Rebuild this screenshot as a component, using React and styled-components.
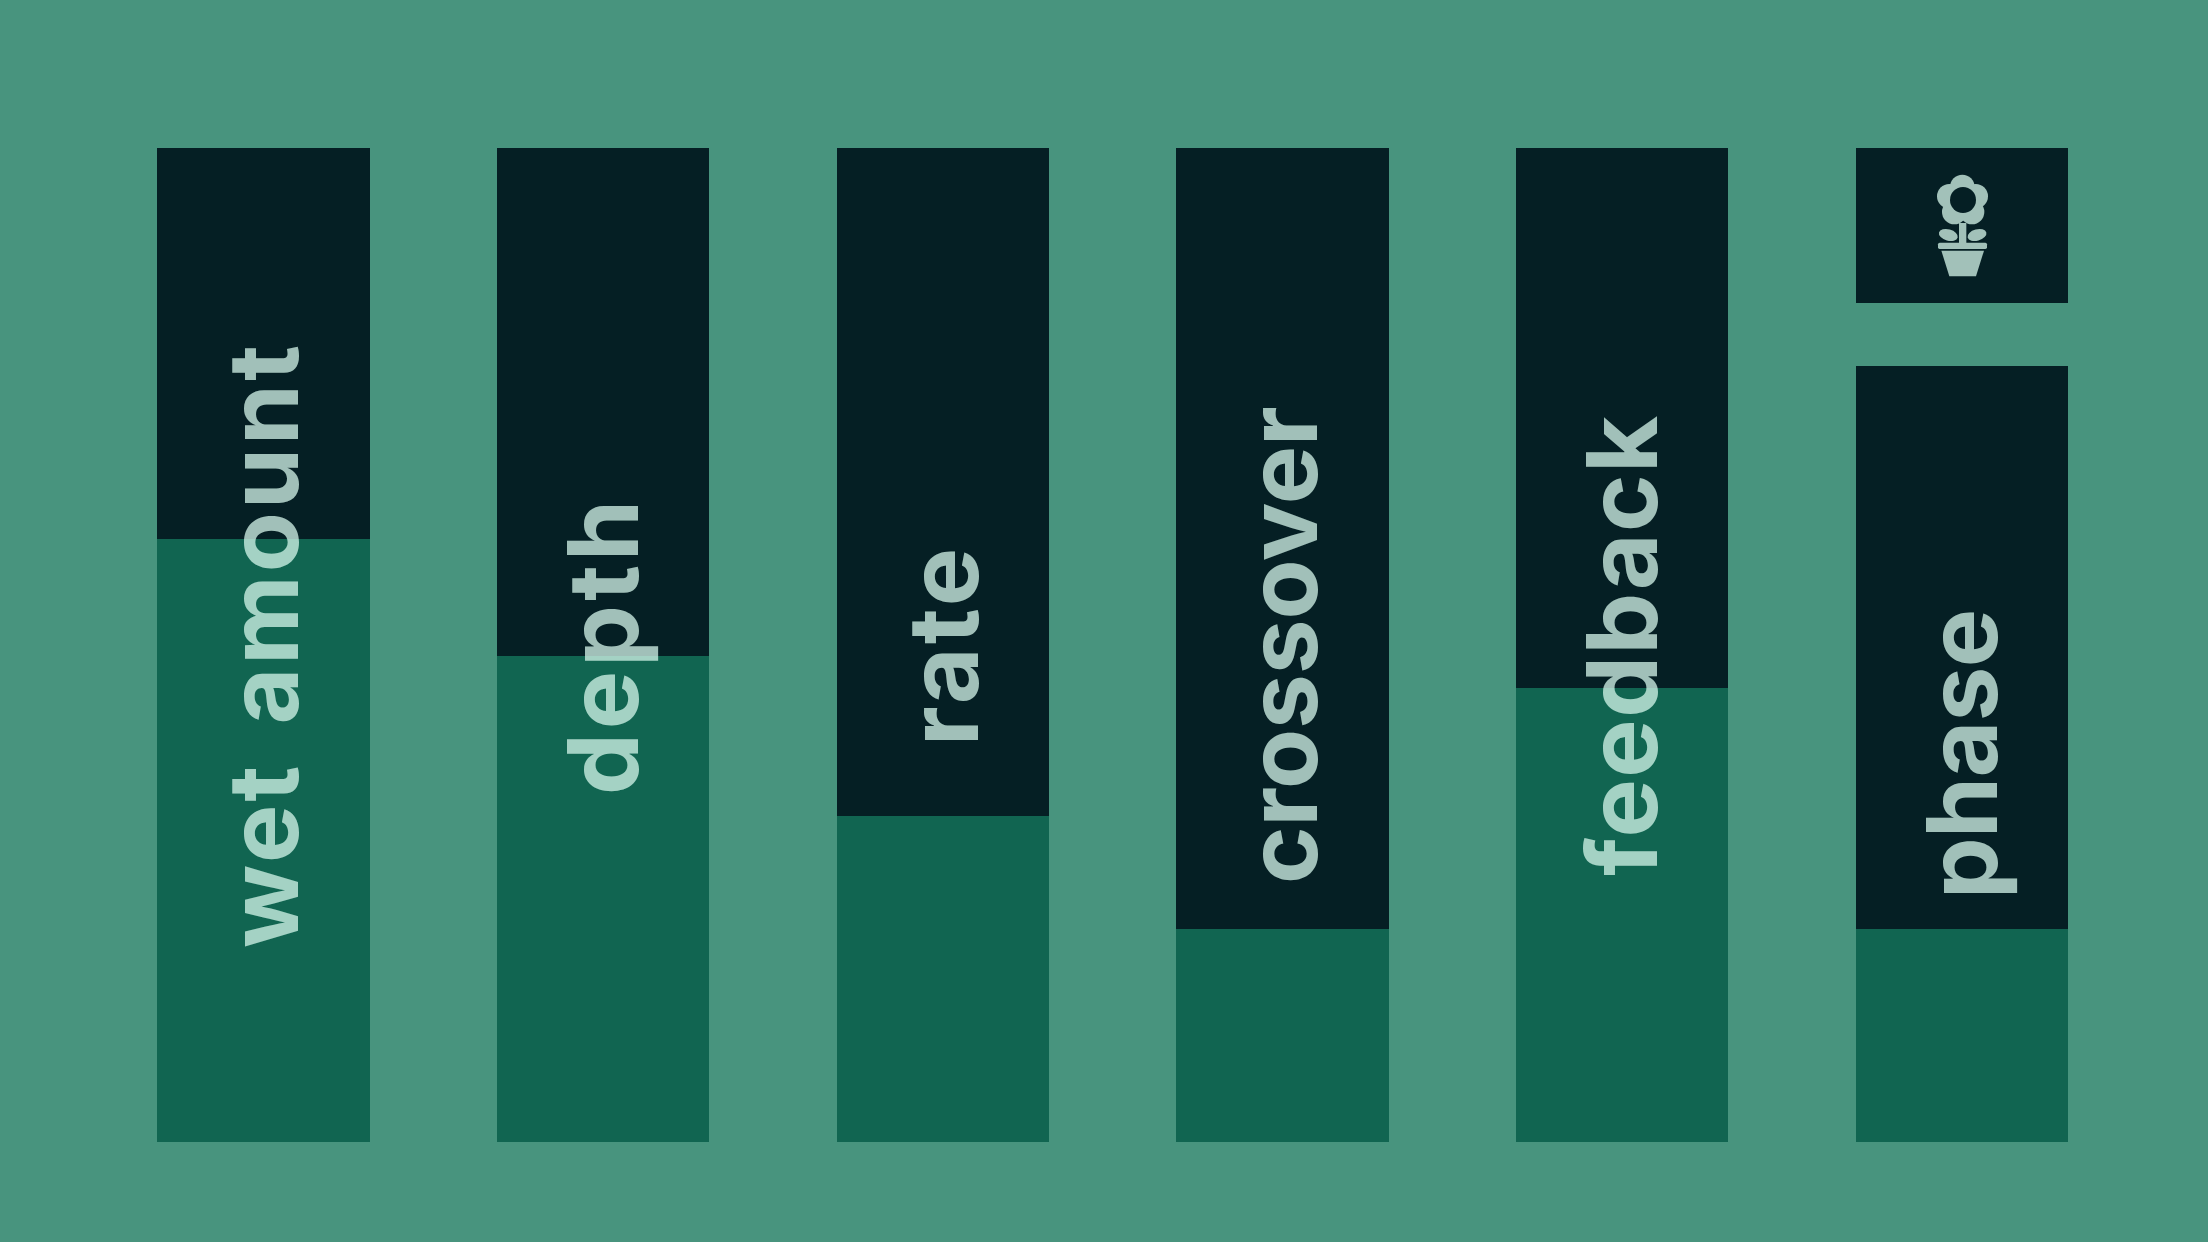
import React from 'react';
import styled, { createGlobalStyle } from 'styled-components';

const background = '#48947e';
const trackColor = '#051f24';
const fillColor = '#116551';
const labelColor = 'rgba(214, 247, 235, 0.75)';
const iconColor = '#a2c1b9';

const GlobalStyle = createGlobalStyle`
  html, body {
    margin: 0;
    padding: 0;
    background: ${background};
  }
`;

const Page = styled.div`
  box-sizing: border-box;
  width: 2208px;
  height: 1242px;
  padding: 148px 139.8px 100px 157.3px;
  display: grid;
  grid-template-columns: repeat(6, 212.3px);
  justify-content: space-between;
`;

const Column = styled.div`
  display: flex;
  flex-direction: column;
  gap: 63px;
  height: 994px;
`;

const IconCell = styled.div`
  height: 155px;
  flex: none;
  display: flex;
  align-items: center;
  justify-content: center;
  background: ${trackColor};
`;

const Track = styled.div`
  position: relative;
  flex: 1;
  display: flex;
  flex-direction: column;
  justify-content: flex-end;
  background: ${trackColor};
`;

const Fill = styled.div`
  height: ${props => props.$height}px;
  background: ${fillColor};
`;

const Label = styled.span`
  position: absolute;
  inset: 0;
  display: flex;
  align-items: center;
  justify-content: center;
  writing-mode: vertical-rl;
  transform: rotate(180deg);
  font-family: Inter, sans-serif;
  font-weight: 750;
  font-size: 98px;
  line-height: 1;
  white-space: nowrap;
  letter-spacing: ${props => props.$tracking}px;
  word-spacing: 12px;
  color: ${labelColor};
`;

const FlowerIcon = () => (
  <svg width="55" height="105" viewBox="285 130 165 315" fill={iconColor}>
    <circle cx="367" cy="172" r="37" />
    <circle cx="328" cy="200" r="37" />
    <circle cx="407" cy="200" r="37" />
    <circle cx="343" cy="247" r="37" />
    <circle cx="396" cy="247" r="37" />
    <circle cx="368" cy="210" r="55" />
    <circle cx="369" cy="211" r="39" fill={trackColor} />
    <rect x="357" y="280" width="22" height="60" />
    <ellipse cx="325" cy="316" rx="29" ry="17" transform="rotate(15 325 316)" />
    <ellipse cx="411" cy="316" rx="29" ry="17" transform="rotate(-15 411 316)" />
    <rect x="294" y="339" width="147" height="19" rx="5" />
    <path d="M304 363H432L408 440H328Z" />
  </svg>
);

const sliders = [
  { label: 'wet amount', fill: 603, tracking: 3 },
  { label: 'depth', fill: 486, tracking: 4 },
  { label: 'rate', fill: 326, tracking: 3.1 },
  { label: 'crossover', fill: 213, tracking: -0.1 },
  { label: 'feedback', fill: 454, tracking: 1.5 },
  { label: 'phase', fill: 213, tracking: -0.7, icon: true }
];

const App = () => (
  <Page>
    <GlobalStyle />
    {sliders.map(({ label, fill, tracking, icon }) => (
      <Column key={label}>
        {icon && (
          <IconCell>
            <FlowerIcon />
          </IconCell>
        )}
        <Track>
          <Fill $height={fill} />
          <Label $tracking={tracking}>{label}</Label>
        </Track>
      </Column>
    ))}
  </Page>
);

export default App;
